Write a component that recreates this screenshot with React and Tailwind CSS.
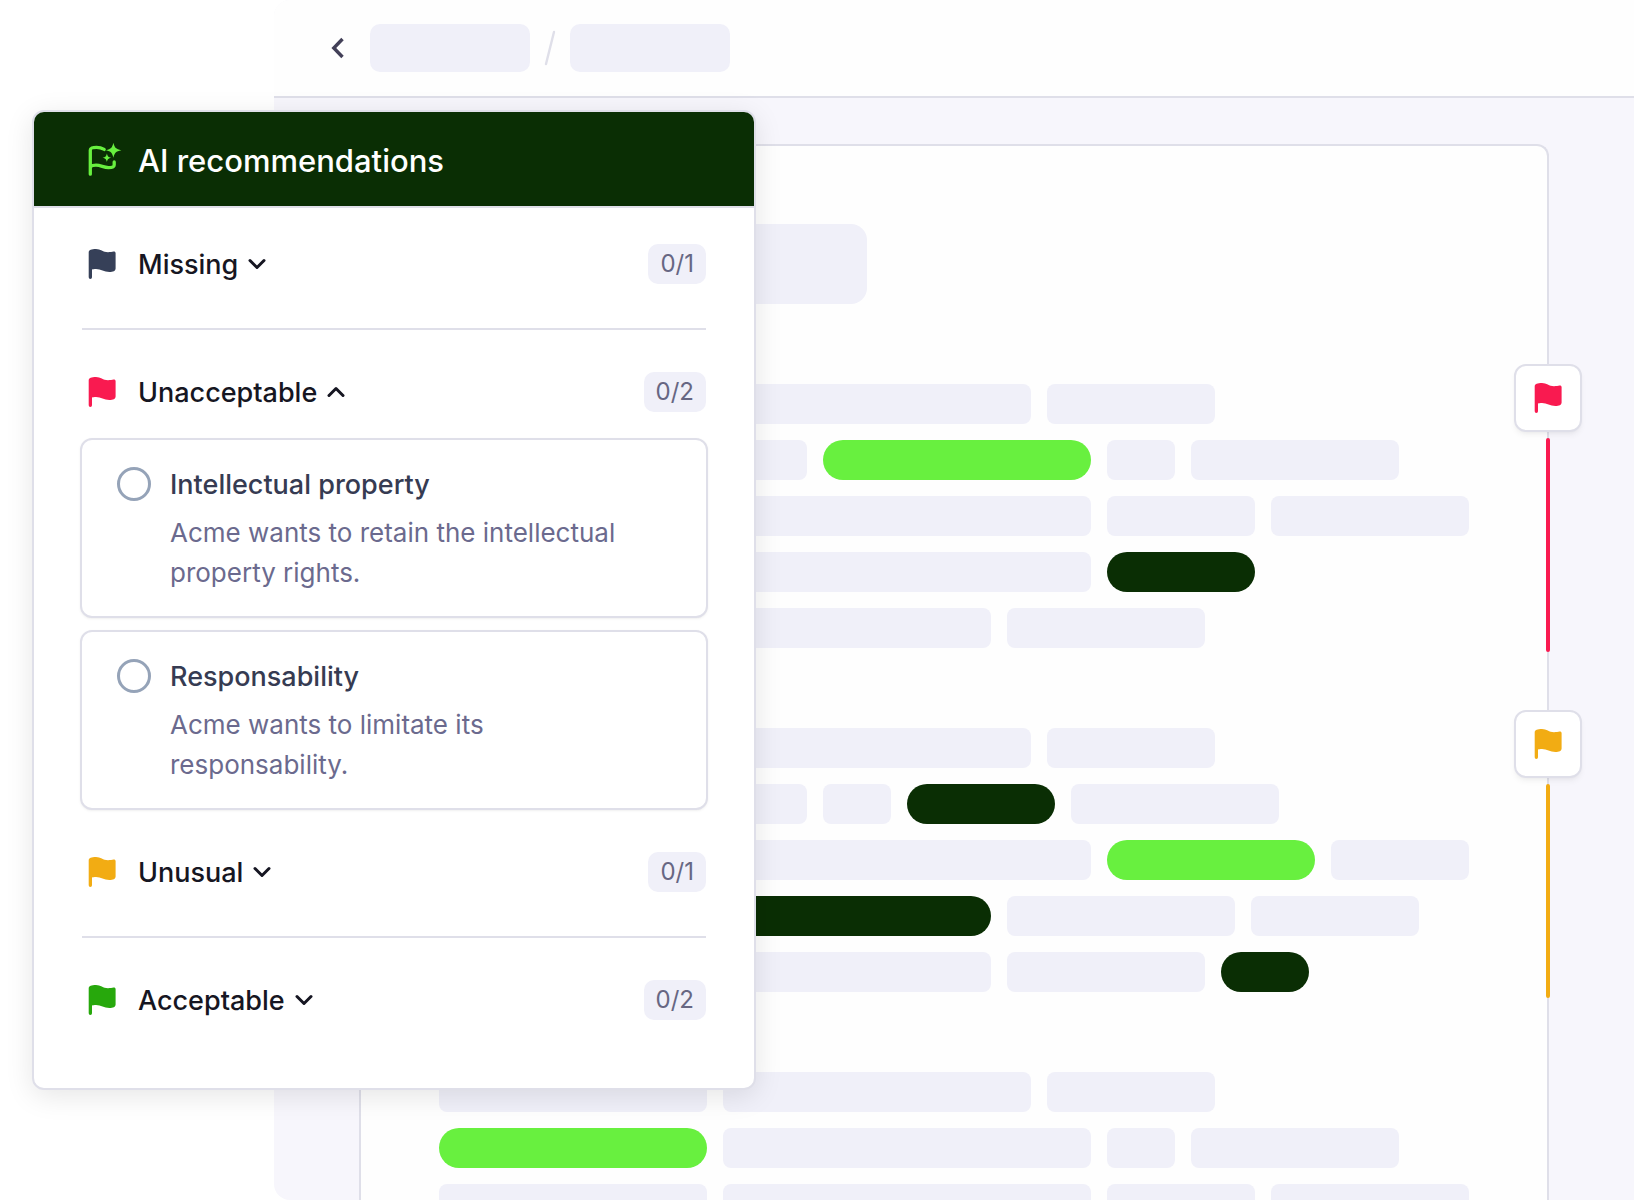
import React from "react";

const MARK_COLORS = {
  missing: "text-[#364058]",
  unacceptable: "text-[#f91a50]",
  unusual: "text-[#f2ac13]",
  acceptable: "text-[#27a80c]",
};

// Widths of the placeholder words, tone: muted | green | dark
const BAR_WIDTHS = {
  68: "w-[68px]",
  84: "w-[84px]",
  88: "w-[88px]",
  138: "w-[138px]",
  148: "w-[148px]",
  168: "w-[168px]",
  198: "w-[198px]",
  208: "w-[208px]",
  228: "w-[228px]",
  268: "w-[268px]",
  308: "w-[308px]",
  368: "w-[368px]",
};

const BAR_TONES = {
  muted: "bg-[#f0f0f9] rounded-lg",
  green: "bg-[#68f03f] rounded-full",
  dark: "bg-[#0a2e04] rounded-full",
};

const SECTIONS = [
  [
    [[268], [308], [168]],
    [[268], [84], [268, "green"], [68], [208]],
    [[268], [368], [148], [198]],
    [[268], [368], [148, "dark"]],
    [[268], [268], [198]],
  ],
  [
    [[268], [308], [168]],
    [[268], [84], [68], [148, "dark"], [208]],
    [[268], [368], [208, "green"], [138]],
    [[268], [268, "dark"], [228], [168]],
    [[268], [268], [198], [88, "dark"]],
  ],
  [
    [[268], [308], [168]],
    [[268, "green"], [368], [68], [208]],
    [[268], [368], [148], [198]],
  ],
];

const UNACCEPTABLE_ITEMS = [
  {
    id: "intellectual-property",
    title: "Intellectual property",
    description: "Acme wants to retain the intellectual property rights.",
  },
  {
    id: "responsability",
    title: "Responsability",
    description: "Acme wants to limitate its responsability.",
  },
];

const FlagIcon = ({ className }) => (
  <svg
    viewBox="0 0 40 40"
    fill="currentColor"
    aria-hidden="true"
    className={`h-10 w-10 shrink-0 ${className}`}
  >
    <path d="M6.7 8.2C6.7 6 9.5 5 14 5C18.5 5 21 8.2 26 8.2C28.5 8.2 30 7.7 31.5 7.5C32.8 7.4 33.6 8 33.6 9V24.5C33.6 27 31 28 27.5 28C22 28 19 25 14 25C12 25 11 25.2 10 25.6V33.3A1.65 1.65 0 0 1 6.7 33.3Z" />
  </svg>
);

const AiFlagIcon = () => (
  <svg
    viewBox="0 0 40 40"
    aria-hidden="true"
    className="h-10 w-10 shrink-0 text-[#68f03f]"
  >
    <path
      d="M22.2 10.4C20 9.2 17.5 8.4 14.5 8.4C10.5 8.4 8.3 9.4 8.3 11V35.2M8.3 27.6C9.5 26.8 11.5 26.2 14 26.2C19 26.2 21.5 28.6 26.5 28.6C30.5 28.6 32.2 27.8 32.2 26V23"
      fill="none"
      stroke="currentColor"
      strokeWidth="3.3"
      strokeLinecap="round"
      strokeLinejoin="round"
    />
    <path
      d="M31.4 3.8C32.6 8.8 33.8 10 39.4 11.2C33.8 12.4 32.6 13.6 31.4 18.8C30.2 13.6 29 12.4 24 11.2C29 10 30.2 8.8 31.4 3.8Z"
      fill="currentColor"
    />
    <path
      d="M24.9 14.4C25.6 17.3 26.3 18 29.2 18.7C26.3 19.4 25.6 20.1 24.9 23C24.2 20.1 23.5 19.4 20.6 18.7C23.5 18 24.2 17.3 24.9 14.4Z"
      fill="currentColor"
    />
  </svg>
);

const ChevronIcon = ({ up = false }) => (
  <svg
    viewBox="0 0 18 12"
    fill="none"
    stroke="currentColor"
    strokeWidth="3"
    strokeLinecap="round"
    strokeLinejoin="round"
    aria-hidden="true"
    className="h-3 w-[18px] shrink-0"
  >
    <path d={up ? "M2 9.5L9 2.5L16 9.5" : "M2 2.5L9 9.5L16 2.5"} />
  </svg>
);

const Bar = ({ width, tone = "muted" }) => (
  <div className={`h-10 shrink-0 ${BAR_WIDTHS[width]} ${BAR_TONES[tone]}`} />
);

const Marker = ({ label, color, line }) => (
  <div className="flex flex-col items-center gap-1.5">
    <button
      type="button"
      aria-label={label}
      className="flex h-[68px] w-[68px] items-center justify-center rounded-xl border-2 border-[#dfdfe9] bg-white shadow-md shadow-black/5"
    >
      <FlagIcon className={color} />
    </button>
    <div className={`h-[214px] w-1 rounded-full ${line}`} />
  </div>
);

const GroupHeader = ({ label, color, count, open = false }) => (
  <div className="flex h-10 items-center justify-between">
    <button
      type="button"
      aria-expanded={open}
      className="flex items-center gap-4 text-[#161622]"
    >
      <FlagIcon className={color} />
      <span className="flex items-center gap-2.5">
        <span className="pt-0.5 text-[27px] leading-10 font-medium">
          {label}
        </span>
        <ChevronIcon up={open} />
      </span>
    </button>
    <span className="rounded-[10px] bg-[#f0f0f9] px-3 text-2xl leading-10 text-[#676783]">
      {count}
    </span>
  </div>
);

const RecommendationItem = ({ item }) => (
  <div className="flex gap-[19px] rounded-xl border-2 border-[#dfdfe9] bg-white pt-[25px] pr-16 pb-[23px] pl-[35px] shadow-sm shadow-black/5">
    <input
      type="radio"
      id={item.id}
      name="recommendation"
      className="mt-0.5 h-[34px] w-[34px] shrink-0 appearance-none rounded-full border-3 border-[#95a3b8] checked:bg-[#68f03f]"
    />
    <div>
      <label
        htmlFor={item.id}
        className="block text-[27px] leading-10 font-medium text-[#363b52]"
      >
        {item.title}
      </label>
      <p className="mt-2 text-[26px] leading-10 text-[#6b6a8e]">
        {item.description}
      </p>
    </div>
  </div>
);

const RecommendationsPanel = () => (
  <section className="absolute top-[110px] left-8 w-[724px] overflow-hidden rounded-xl border-2 border-[#dfdfe9] bg-white pb-[68px] shadow-[0_6px_28px_rgba(0,0,0,0.1)]">
    <header className="flex h-24 items-center gap-4 border-b-2 border-[#dfdfe9] bg-[#0a2e04] px-12">
      <AiFlagIcon />
      <h1 className="pt-1 text-[31px] leading-10 font-medium text-white">
        AI recommendations
      </h1>
    </header>

    <div className="px-12 pt-9">
      <GroupHeader label="Missing" color={MARK_COLORS.missing} count="0/1" />
      <hr className="mt-11 mb-[42px] border-t-2 border-[#dfdfe9]" />

      <GroupHeader
        label="Unacceptable"
        color={MARK_COLORS.unacceptable}
        count="0/2"
        open
      />
      <div className="-mx-0.5 mt-[26px] mb-[42px] flex flex-col gap-3">
        {UNACCEPTABLE_ITEMS.map((item) => (
          <RecommendationItem key={item.id} item={item} />
        ))}
      </div>

      <GroupHeader label="Unusual" color={MARK_COLORS.unusual} count="0/1" />
      <hr className="mt-11 mb-[42px] border-t-2 border-[#dfdfe9]" />

      <GroupHeader
        label="Acceptable"
        color={MARK_COLORS.acceptable}
        count="0/2"
      />
    </div>
  </section>
);

const TopBar = () => (
  <header className="flex h-[98px] shrink-0 items-center border-b-2 border-[#dfdfe9] bg-[#fefefe] pl-14">
    <button type="button" aria-label="Back" className="mr-6 text-[#434058]">
      <svg
        viewBox="0 0 16 22"
        fill="none"
        stroke="currentColor"
        strokeWidth="3.4"
        aria-hidden="true"
        className="h-[22px] w-4"
      >
        <path d="M12.5 2L3.8 11L12.5 20" />
      </svg>
    </button>
    <div className="h-12 w-40 rounded-[10px] bg-[#f0f0f9]" />
    <svg
      viewBox="0 0 40 40"
      fill="none"
      stroke="#dfdfe9"
      strokeWidth="2.4"
      strokeLinecap="round"
      aria-hidden="true"
      className="h-10 w-10"
    >
      <path d="M24 4L16 36" />
    </svg>
    <div className="h-12 w-40 rounded-[10px] bg-[#f0f0f9]" />
  </header>
);

const DocumentPage = () => (
  <article className="relative mx-[85px] mt-[46px] flex-1 rounded-t-xl border-2 border-b-0 border-[#dfdfe9] bg-[#fefefe] p-[78px]">
    <div className="h-20 w-[428px] rounded-2xl bg-[#f0f0f9]" />
    <div className="mt-20 flex flex-col gap-20">
      {SECTIONS.map((rows, i) => (
        <div key={i} className="flex flex-col gap-4">
          {rows.map((bars, j) => (
            <div key={j} className="flex gap-4">
              {bars.map(([width, tone], k) => (
                <Bar key={k} width={width} tone={tone} />
              ))}
            </div>
          ))}
        </div>
      ))}
    </div>

    {/* Flags pinned on the right edge of the page */}
    <div className="absolute top-[218px] -right-[35px] flex flex-col gap-[58px]">
      <Marker
        label="Unacceptable clause"
        color={MARK_COLORS.unacceptable}
        line="bg-[#f91a50]"
      />
      <Marker
        label="Unusual clause"
        color={MARK_COLORS.unusual}
        line="bg-[#f2ac13]"
      />
    </div>
  </article>
);

const App = () => {
  return (
    <div className="relative h-screen overflow-hidden bg-white font-['Inter',sans-serif]">
      <main className="ml-[274px] flex h-full flex-col overflow-hidden rounded-l-2xl bg-[#f7f6fc]">
        <TopBar />
        <DocumentPage />
      </main>
      <RecommendationsPanel />
    </div>
  );
};

export default App;
